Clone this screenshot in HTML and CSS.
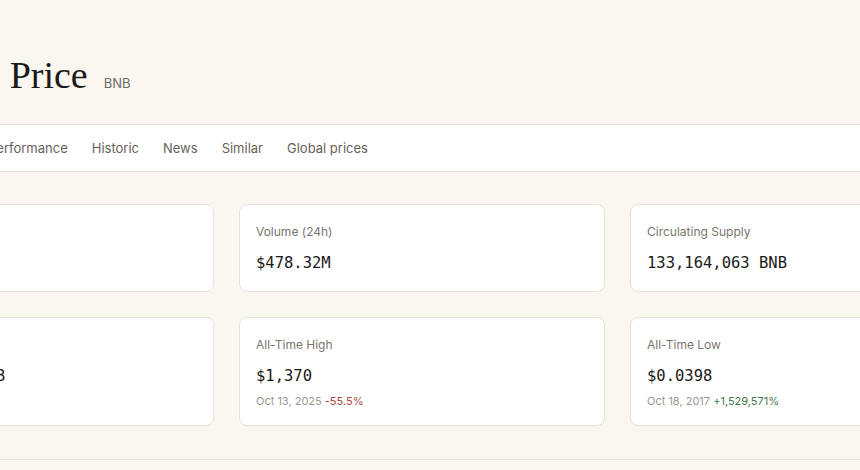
FILE: index.html
```html
<!DOCTYPE html>
<html lang="en">
<head>
<meta charset="utf-8">
<title>BNB Price</title>
<link rel="stylesheet" href="styles.css">
</head>
<body>
  <header class="coin-header">
    <div class="wrap title-row">
      <span class="coin-logo"></span>
      <h1 class="coin-title">BNB Price</h1>
      <span class="coin-symbol">BNB</span>
    </div>
  </header>

  <nav class="tabs">
    <div class="wrap tab-list">
      <a class="tab" href="#">Overview</a>
      <a class="tab" href="#">Performance</a>
      <a class="tab" href="#">Historic</a>
      <a class="tab" href="#">News</a>
      <a class="tab" href="#">Similar</a>
      <a class="tab" href="#">Global prices</a>
    </div>
  </nav>

  <main class="wrap stats">
    <div class="stat-card">
      <div class="stat-label">Market Cap</div>
      <div class="stat-value">$82.10B</div>
    </div>
    <div class="stat-card">
      <div class="stat-label">Volume (24h)</div>
      <div class="stat-value">$478.32M</div>
    </div>
    <div class="stat-card">
      <div class="stat-label">Circulating Supply</div>
      <div class="stat-value">133,164,063 BNB</div>
    </div>
    <div class="stat-card">
      <div class="stat-label">Max Supply</div>
      <div class="stat-value">200,000,000 BNB</div>
    </div>
    <div class="stat-card">
      <div class="stat-label">All-Time High</div>
      <div class="stat-value">$1,370</div>
      <div class="stat-meta">Oct 13, 2025 <span class="down">-55.5%</span></div>
    </div>
    <div class="stat-card">
      <div class="stat-label">All-Time Low</div>
      <div class="stat-value">$0.0398</div>
      <div class="stat-meta">Oct 18, 2017 <span class="up">+1,529,571%</span></div>
    </div>
  </main>

  <section class="next-section"></section>
</body>
</html>
```

FILE: styles.css
```css
html, body {
  margin: 0;
  padding: 0;
}

body {
  background: #faf7f1;
  font-family: Inter, "Noto Sans", sans-serif;
  color: #1b1a18;
  overflow-x: hidden;
}

/* shared content column, wider than the window */
.wrap {
  width: 1148px;
  margin-left: -152px;
}

.coin-header {
  padding: 53px 0 27px;
}

.title-row {
  display: flex;
  align-items: baseline;
  gap: 16px;
}

.coin-logo {
  width: 44px;
  height: 44px;
  border-radius: 50%;
  background: #f0b90b;
  align-self: center;
  margin-right: 14px;
}

.coin-title {
  margin: 0;
  font-family: "Liberation Serif", serif;
  font-weight: 400;
  font-size: 38px;
  line-height: 44px;
  color: #1b1a18;
}

.coin-symbol {
  font-size: 13px;
  color: #6f6a64;
}

.tabs {
  background: #ffffff;
  border-top: 1px solid #e7e1d6;
  border-bottom: 1px solid #e7e1d6;
}

.tab-list {
  display: flex;
  gap: 24px;
  height: 46px;
  align-items: center;
  padding-left: 58px;
}

.tab {
  font-size: 13px;
  color: #66615b;
  text-decoration: none;
}

.stats {
  display: grid;
  grid-template-columns: repeat(3, 1fr);
  column-gap: 25px;
  row-gap: 25px;
  padding-top: 32px;
}

.stat-card {
  box-sizing: border-box;
  min-height: 88px;
  background: #ffffff;
  border: 1px solid #e8e3da;
  border-radius: 8px;
  padding: 19px 16px 17px;
}

.stat-label {
  font-size: 12px;
  line-height: 16px;
  color: #7a756f;
}

.stat-value {
  margin-top: 13px;
  font-family: "DejaVu Sans Mono", monospace;
  font-size: 15.5px;
  line-height: 20px;
  color: #1b1a18;
}

.stat-meta {
  margin-top: 8px;
  font-size: 11px;
  line-height: 14px;
  color: #9c9791;
}

.down { color: #a8463f; }
.up { color: #3f7a4b; }

.next-section {
  margin-top: 33px;
  border-top: 1px solid #e5dfd4;
  height: 20px;
}
```
